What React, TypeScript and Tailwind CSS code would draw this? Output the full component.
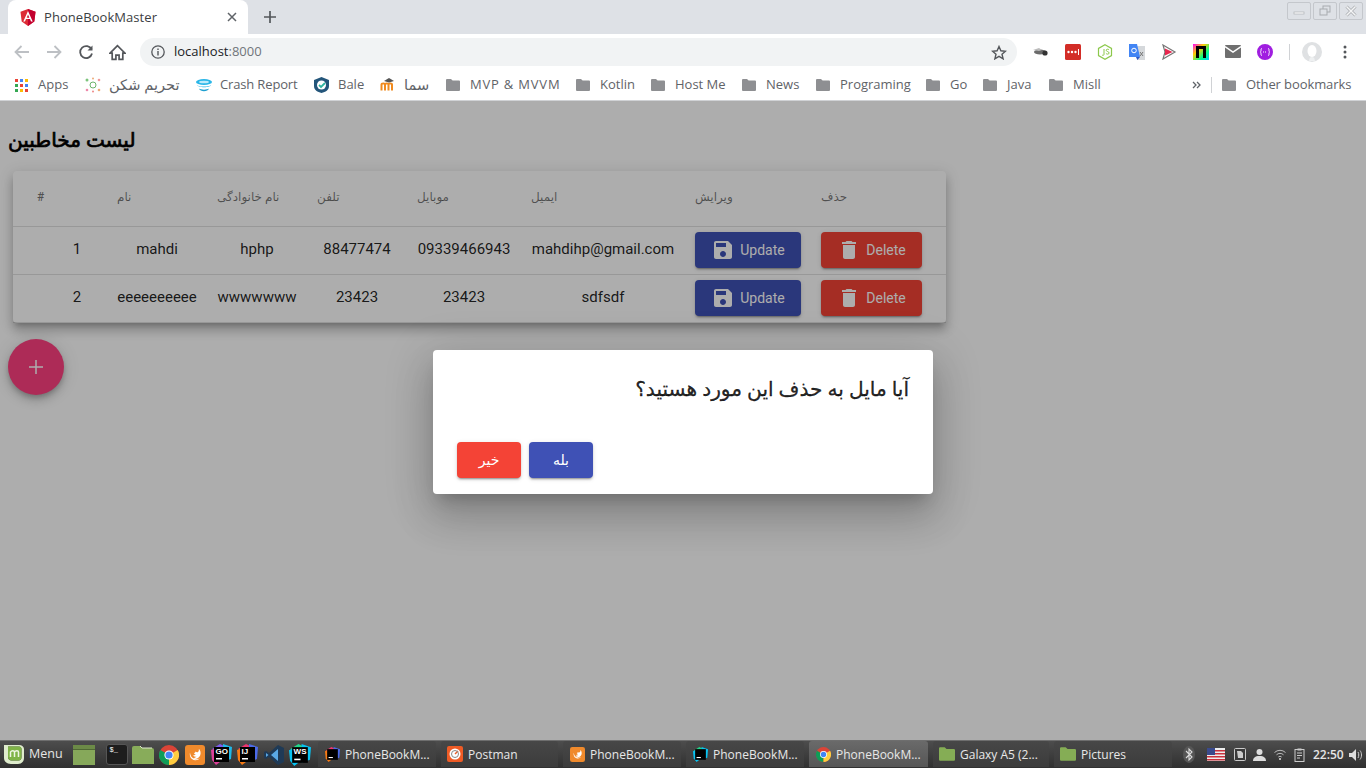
import React from "react";

const ui = { fontFamily: '"Open Sans","Noto Sans","DejaVu Sans",sans-serif' };

function Folder({ c = "#8e8f92", w = 14, h = 12 }: { c?: string; w?: number; h?: number }) {
  return (
    <svg width={w} height={h} viewBox="0 0 14 12" className="shrink-0">
      <path d="M1 0h4l1.6 1.6H13a1 1 0 0 1 1 1V11a1 1 0 0 1-1 1H1a1 1 0 0 1-1-1V1a1 1 0 0 1 1-1z" fill={c} />
    </svg>
  );
}

function Apps() {
  const cols = ["#ea4335", "#4285f4", "#fbbc05", "#34a853", "#ea4335", "#4285f4", "#34a853", "#fbbc05", "#ea4335"];
  return (
    <div className="grid grid-cols-3 gap-[2px] w-[13px] shrink-0">
      {cols.map((c, i) => (
        <svg key={i} width="3" height="3"><rect width="3" height="3" fill={c} /></svg>
      ))}
    </div>
  );
}

function Bookmark({ icon, text, cls, textCls = "" }: { icon: React.ReactNode; text: string; cls: string; textCls?: string }) {
  return (
    <div className={`flex items-center ${cls}`}>
      {icon}
      <span className={`whitespace-nowrap ${textCls}`}>{text}</span>
    </div>
  );
}

function ChromeIcon({ s = 20 }: { s?: number }) {
  return (
    <svg width={s} height={s} viewBox="0 0 20 20" className="shrink-0">
      <circle cx="10" cy="10" r="10" fill="#db4437" />
      <path d="M10 10 1.3 5 A10 10 0 0 0 10 20 Z" fill="#0f9d58" />
      <path d="M10 10 10 20 A10 10 0 0 0 18.7 5 Z" fill="#ffcd40" />
      <circle cx="10" cy="10" r="4.6" fill="#fff" />
      <circle cx="10" cy="10" r="3.6" fill="#4285f4" />
    </svg>
  );
}

function FirefoxIcon({ s = 20 }: { s?: number }) {
  return (
    <svg width={s} height={s} viewBox="0 0 20 20" className="shrink-0">
      <rect width="20" height="20" rx="3" fill="#f08a2c" />
      <path d="M14.5 4.5c1.5 2 1.6 5.4-.3 7.6-2 2.2-5.4 2.4-7.4.7 1.7.4 3.6-.1 4.6-1.4-1.3.5-2.8.2-3.4-.9 1.1.3 2.4-.4 2.8-1.4-1 .2-1.7-.4-1.7-1.2.9-.2 1.3-.7 1.4-1.4.8.8 2 1 2.8.2.5-.6.7-1.6.6-2.7z" fill="#fff" />
      <path d="M5 7.5c-.8 3.2.8 7.4 5.2 7.7 2 .1 3.6-.6 4.7-1.9-2.6 1.6-6.4 1.3-8.3-1.3C5.700 10.800 5.200 9.200 5 7.500z" fill="#fff" />
    </svg>
  );
}

function JbIcon({ label, colors, s = 21 }: { label: string; colors: string[]; s?: number }) {
  return (
    <div className="relative shrink-0" style={{ width: s, height: s }}>
      <svg width={s} height={s} viewBox="0 0 21 21" className="absolute inset-0">
        <path d="M1 5 9 0l6 3-3 6z" fill={colors[0]} />
        <path d="M12 0l9 3-1 12-8 3z" fill={colors[1]} />
        <path d="M0 6l5-2 4 14-4 3-4-5z" fill={colors[2]} />
        <rect x="3" y="3" width="15" height="15" fill="#000" />
        <rect x="5" y="14" width="6" height="1.500" fill="#fff" />
      </svg>
      <span className="absolute left-[5px] top-[3px] text-[8px] leading-[10px] font-bold text-white" style={{ fontFamily: '"Liberation Sans",sans-serif' }}>{label}</span>
    </div>
  );
}

const JB_GO = ["#7b5cf0", "#1fb8e8", "#dd3f9a"];
const JB_IJ = ["#f0346e", "#4b6ae8", "#f97a12"];
const JB_WS = ["#21d789", "#07c3f2", "#07c3f2"];

function TaskItem({ icon, text, active, w }: { icon: React.ReactNode; text: string; active?: boolean; w: string }) {
  return (
    <div className={`h-[26px] flex items-center gap-[5px] pl-[6px] rounded-t-[3px] shrink-0 ${w} ${active ? "bg-gradient-to-b from-[#6a6a6a] to-[#565656]" : "bg-gradient-to-b from-[#474747] to-[#3c3c3c]"}`}>
      <div className="w-[16px] h-[16px] flex items-center justify-center shrink-0">{icon}</div>
      <span className="text-[12px] mt-[1px] text-[#e8e8e8] whitespace-nowrap">{text}</span>
    </div>
  );
}

const Save = () => (
  <svg width="24" height="24" viewBox="0 0 24 24" fill="currentColor" className="shrink-0">
    <path d="M17 3H5c-1.11 0-2 .9-2 2v14c0 1.1.89 2 2 2h14c1.1 0 2-.9 2-2V7l-4-4zm-5 16c-1.66 0-3-1.34-3-3s1.34-3 3-3 3 1.34 3 3-1.34 3-3 3zm3-10H5V5h10v4z" />
  </svg>
);
const Trash = () => (
  <svg width="24" height="24" viewBox="0 0 24 24" fill="currentColor" className="shrink-0">
    <path d="M6 19c0 1.1.9 2 2 2h8c1.1 0 2-.9 2-2V7H6v12zM19 4h-3.5l-1-1h-5l-1 1H5v2h14V4z" />
  </svg>
);

const btnShadow = "shadow-[0_3px_1px_-2px_rgba(0,0,0,.2),0_2px_2px_0_rgba(0,0,0,.14),0_1px_5px_0_rgba(0,0,0,.12)]";
const gridCols = "grid grid-cols-[60px_80px_80px_80px_94px_144px_106px_101px] gap-x-5 pl-6 pr-6";

function Row({ n, a, b, c, d, e }: { n: string; a: string; b: string; c: string; d: string; e: string }) {
  return (
    <div className={`${gridCols} h-[48px] items-center border-b border-black/12 text-[15px] text-black/87 text-center`}>
      <div className="pl-5 pb-[2px]">{n}</div>
      <div className="pb-[2px] whitespace-nowrap">{a}</div>
      <div className="pb-[2px] whitespace-nowrap">{b}</div>
      <div className="pb-[2px] whitespace-nowrap">{c}</div>
      <div className="pb-[2px] whitespace-nowrap">{d}</div>
      <div className="pb-[2px] whitespace-nowrap">{e}</div>
      <div className={`h-[36px] mb-[2px] rounded-[4px] bg-[#3f51b5] text-white text-[14px] flex items-center justify-center gap-[5px] ${btnShadow}`}>
        <Save /><span className="mt-[1px]">Update</span>
      </div>
      <div className={`h-[36px] mb-[2px] rounded-[4px] bg-[#f44336] text-white text-[14px] flex items-center justify-center gap-[5px] ${btnShadow}`}>
        <Trash /><span className="mt-[1px]">Delete</span>
      </div>
    </div>
  );
}

export default function App() {
  const fd = <Folder />;
  return (
    <div className="h-screen w-full flex flex-col overflow-hidden bg-white" style={ui}>
      {/* tab strip */}
      <div className="h-[34px] bg-[#dee1e6] flex items-end relative shrink-0">
        <div className="ml-[8px] w-[240px] h-[34px] bg-white rounded-t-[8px] flex items-center pl-[12px] relative">
          <svg width="16" height="17" viewBox="0 0 16 17" className="shrink-0">
            <path d="M8 0 .5 2.700 1.700 12.600 8 17l6.300-4.400 1.200-9.900z" fill="#dd2c35" />
            <path d="M8 0v17l6.300-4.400 1.200-9.900z" fill="#c3002f" />
            <path d="M8 2 3.300 12.500H5l1-2.400h4l1 2.400h1.700zM6.700 8.700 8 5.600l1.300 3.100z" fill="#fff" />
          </svg>
          <span className="ml-[8px] mt-[1px] text-[13px] tracking-[.06px] text-[#3c4043] whitespace-nowrap">PhoneBookMaster</span>
          <svg width="10" height="10" viewBox="0 0 10 10" className="absolute left-[219px] top-[12px]">
            <path d="M1 1l8 8M9 1l-8 8" stroke="#5f6368" strokeWidth="1.500" />
          </svg>
        </div>
        <svg width="14" height="14" viewBox="0 0 14 14" className="ml-[15px] mb-[10px]">
          <path d="M7 1v12M1 7h12" stroke="#54575b" strokeWidth="1.700" />
        </svg>
        <div className="absolute top-[2px] right-[3px] flex gap-[2px]">
          {[0, 1, 2].map((i) => (
            <div key={i} className="w-[24px] h-[18px] border border-[#c4c7cc] rounded-[2px] flex items-center justify-center">
              <svg width="14" height="12" viewBox="0 0 14 12">
                {i === 0 && <rect x="2" y="7" width="10" height="2" fill="#fff" stroke="#b4b7bb" strokeWidth=".8" />}
                {i === 1 && (
                  <>
                    <rect x="5" y="1" width="7" height="6" fill="none" stroke="#a8abaf" />
                    <rect x="2" y="4" width="7" height="6" fill="#dee1e6" stroke="#a8abaf" />
                  </>
                )}
                {i === 2 && (
                  <>
                    <path d="M2.500 1.500 11.500 10.500M11.500 1.500 2.500 10.500" stroke="#a8abaf" strokeWidth="3" />
                    <path d="M2.500 1.500 11.500 10.500M11.500 1.500 2.500 10.500" stroke="#f4f5f6" strokeWidth="1.500" />
                  </>
                )}
              </svg>
            </div>
          ))}
        </div>
      </div>

      {/* toolbar */}
      <div className="h-[33px] flex items-center pt-[2px] relative shrink-0">
        <div className="flex items-center w-[140px] shrink-0">
          <svg width="16" height="14" viewBox="0 0 16 14" className="ml-[14px]"><path d="M15 7H2M7.500 1 1.500 7l6 6" fill="none" stroke="#bdc0c4" strokeWidth="1.800" /></svg>
          <svg width="16" height="14" viewBox="0 0 16 14" className="ml-[16px]"><path d="M1 7h13M8.500 1l6 6-6 6" fill="none" stroke="#bdc0c4" strokeWidth="1.800" /></svg>
          <svg width="16" height="16" viewBox="0 0 16 16" className="ml-[16px]"><path d="M13.600 5.500A6 6 0 1 0 14 9.500" fill="none" stroke="#54575b" strokeWidth="1.800" /><path d="M14.500 1.500v5h-5z" fill="#54575b" /></svg>
          <svg width="17" height="17" viewBox="0 0 16 16" className="ml-[15px] mt-[1px]"><path d="M8 1.500 1 8.500h2v6h3.500v-4h3v4H13v-6h2z" fill="none" stroke="#54575b" strokeWidth="1.600" /></svg>
        </div>
        <div className="w-[877px] h-[28px] rounded-[14px] bg-[#f1f3f4] flex items-center pl-[11px] relative shrink-0">
          <svg width="14" height="14" viewBox="0 0 14 14"><circle cx="7" cy="7" r="6.200" fill="none" stroke="#54575b" strokeWidth="1.300" /><path d="M7 6v4.500M7 3.500v1.400" stroke="#54575b" strokeWidth="1.400" /></svg>
          <span className="ml-[9px] text-[13px] text-[#202124]">localhost<span className="text-[#70757a]">:8000</span></span>
          <svg width="16" height="15" viewBox="0 0 16 15" className="absolute right-[10px] top-[7px]"><path d="M8 1.500l1.900 4.300 4.600.4-3.500 3 1.100 4.600L8 11.300l-4.100 2.500L5 9.200l-3.500-3 4.600-.4z" fill="none" stroke="#54575b" strokeWidth="1.400" /></svg>
        </div>
        <div className="flex items-center ml-[16px] gap-[16px] shrink-0">
          <svg width="16" height="16" viewBox="0 0 16 16"><ellipse cx="7" cy="8" rx="6" ry="2.500" fill="#6b6b6b" /><path d="M0 6l6-2 3 2-3 1z" fill="#bbb" /><circle cx="12" cy="9" r="2.600" fill="#333" /></svg>
          <svg width="16" height="16" viewBox="0 0 16 16"><rect width="16" height="16" rx="1.500" fill="#d32d27" /><circle cx="3.500" cy="8" r="1.200" fill="#fff" /><circle cx="7" cy="8" r="1.200" fill="#fff" /><circle cx="10.500" cy="8" r="1.200" fill="#fff" /><rect x="13" y="5" width="1" height="6" fill="#fff" /></svg>
          <svg width="16" height="16" viewBox="0 0 16 16"><path d="M8 .7l6.500 3.700v7.200L8 15.300l-6.500-3.700V4.400z" fill="none" stroke="#8cc84b" strokeWidth="1.200" /><path d="M7 5v5.500c0 1-1.300 1-2 .5M12 6c-.7-1.200-2.800-1-2.800.3 0 1.500 2.900 1 2.900 2.700 0 1.500-2.500 1.500-3.200.2" fill="none" stroke="#8cc84b" strokeWidth="1" /></svg>
          <svg width="16" height="16" viewBox="0 0 16 16"><path d="M7 2h9v14H8z" fill="#d5d8db" /><path d="M0 0h8l3 13H0z" fill="#4285f4" /><path d="M7 13h4l-2.600 3z" fill="#2a56c6" /><circle cx="5" cy="6.500" r="2.300" fill="none" stroke="#fff" strokeWidth="1" /><path d="M11 8l3 4M14 8l-3 4" stroke="#777" /></svg>
          <svg width="16" height="16" viewBox="0 0 16 16"><path d="M2 1l12 7-12 7 2-7z" fill="none" stroke="#777" strokeWidth="1.200" /><path d="M4 4.500 11.500 8 4 11.500z" fill="#e8264e" /></svg>
          <svg width="16" height="16" viewBox="0 0 16 16"><defs><linearGradient id="rb" x1="0" y1="0" x2="1" y2="1"><stop offset="0" stopColor="#f0f" /><stop offset=".35" stopColor="#fc0" /><stop offset=".7" stopColor="#0f8" /><stop offset="1" stopColor="#0cf" /></linearGradient></defs><rect width="16" height="16" fill="url(#rb)" /><path d="M3 2h10v12h-3V5H6v9H3z" fill="#000" /></svg>
          <svg width="16" height="13" viewBox="0 0 16 13"><rect width="16" height="13" rx="1" fill="#6f6f6f" /><path d="M0 1.500 8 7l8-5.500" fill="none" stroke="#fff" strokeWidth="1.500" /></svg>
          <svg width="16" height="16" viewBox="0 0 16 16"><circle cx="8" cy="8" r="8" fill="#a01ee0" /><path d="M5 4.500c-1 0-1 1-1 2s-.8 1.500-.8 1.500.8.500.8 1.500 0 2 1 2M11 4.500c1 0 1 1 1 2s.8 1.500.8 1.500-.8.500-.8 1.500 0 2-1 2" fill="none" stroke="#fff" /><path d="M6 8h4" stroke="#fff" strokeDasharray="1 1" /></svg>
        </div>
        <div className="ml-[16px] w-px h-[16px] bg-[#d0d2d5] shrink-0" />
        <svg width="20" height="20" viewBox="0 0 20 20" className="ml-[12px] shrink-0"><circle cx="10" cy="10" r="10" fill="#dfe1e3" /><ellipse cx="10" cy="9" rx="4.500" ry="6" fill="#fff" /><path d="M10 15c3 0 2.500 3 3 4h-6c.5-1 0-4 3-4z" fill="#eef0f1" /></svg>
        <svg width="4" height="14" viewBox="0 0 4 14" className="ml-[21px] shrink-0"><circle cx="2" cy="2" r="1.500" fill="#54575b" /><circle cx="2" cy="7" r="1.500" fill="#54575b" /><circle cx="2" cy="12" r="1.500" fill="#54575b" /></svg>
      </div>

      {/* bookmarks */}
      <div className="h-[34px] flex items-center text-[13px] text-[#5f6368] border-b border-[#d0d2d5] relative shrink-0 pl-[15px] pt-[3px]">
        <Bookmark cls="gap-[10px] w-[70px]" icon={<Apps />} text="Apps" />
        <Bookmark cls="gap-[8px] w-[111px]" textCls="text-[14.6px]" text="تحریم شکن" icon={
          <svg width="16" height="16" viewBox="0 0 16 16" className="shrink-0"><circle cx="8" cy="8" r="3" fill="none" stroke="#6cb56c" /><circle cx="2" cy="3" r="1.500" fill="#7cc47c" /><circle cx="14" cy="3" r="1.300" fill="#e99" /><circle cx="2" cy="13" r="1.300" fill="#e8a" /><circle cx="14" cy="13" r="1.300" fill="#ea7" /><circle cx="8" cy="1.500" r="1" fill="#ea7" /><circle cx="8" cy="14.500" r="1" fill="#e88" /></svg>
        } />
        <Bookmark cls="gap-[8px] w-[118px]" textCls="tracking-[-.15px]" text="Crash Report" icon={
          <svg width="16" height="13" viewBox="0 0 16 13" className="shrink-0"><ellipse cx="8" cy="3" rx="8" ry="3" fill="#29b6e8" /><ellipse cx="8" cy="3" rx="5" ry="1.300" fill="#bdeafa" /><path d="M1 6c2 2 12 2 14 0-.5 3-13 3-14 0z" fill="#29b6e8" /><path d="M3 9.500c2 1.500 8 1.500 10 0C12 13 4 13 3 9.500z" fill="#1d9fd0" /></svg>
        } />
        <Bookmark cls="gap-[9px] w-[66px]" text="Bale" icon={
          <svg width="15" height="16" viewBox="0 0 15 16" className="shrink-0"><path d="M7.500 0 15 3v6c0 4-3.500 6-7.500 7C3.500 15 0 13 0 9V3z" fill="#23557a" /><circle cx="7.500" cy="8" r="4.500" fill="#fff" /><path d="M5 8l2 2 4-4" fill="none" stroke="#2eb5a0" strokeWidth="1.800" /></svg>
        } />
        <Bookmark cls="gap-[8px] w-[66px]" textCls="text-[14.6px]" text="سما" icon={
          <svg width="16" height="13" viewBox="0 0 16 13" className="shrink-0"><path d="M1.500 12.500V6.500c0-1.500 3.500-1.500 3.500 0v6M5 6.500c0-1.500 3.500-1.500 3.500 0v6M8.500 6.500c0-1.500 3.500-1.500 3.500 0v6" fill="none" stroke="#f08a1e" strokeWidth="2" /><path d="M4 3l5-3 5 3-5 1.500z" fill="#555" /></svg>
        } />
        <Bookmark cls="gap-[10px] w-[130px]" textCls="tracking-[.8px]" icon={fd} text="MVP & MVVM" />
        <Bookmark cls="gap-[10px] w-[75px]" icon={fd} text="Kotlin" />
        <Bookmark cls="gap-[10px] w-[91px]" icon={fd} text="Host Me" />
        <Bookmark cls="gap-[10px] w-[74px]" icon={fd} text="News" />
        <Bookmark cls="gap-[10px] w-[110px]" icon={fd} text="Programing" />
        <Bookmark cls="gap-[10px] w-[57px]" icon={fd} text="Go" />
        <Bookmark cls="gap-[10px] w-[66px]" icon={fd} text="Java" />
        <Bookmark cls="gap-[10px] w-[143px]" icon={fd} text="Misll" />
        <svg width="9" height="8" viewBox="0 0 9 8" className="shrink-0"><path d="M1 1l3 3-3 3M5 1l3 3-3 3" fill="none" stroke="#5f6368" strokeWidth="1.300" /></svg>
        <div className="ml-[10px] w-px h-[16px] bg-[#d0d2d5] shrink-0" />
        <Bookmark cls="gap-[10px] ml-[10px]" textCls="tracking-[-.1px]" icon={fd} text="Other bookmarks" />
      </div>

      {/* page */}
      <main className="flex-1 min-h-0 relative bg-white overflow-hidden" style={{ fontFamily: 'Roboto,"Noto Sans","DejaVu Sans",sans-serif' }}>
        <h2 className="text-[20px] font-normal leading-[32px] text-black pl-[8px] pt-[23px] h-[70px] [-webkit-text-stroke:0.7px_#000]">لیست مخاطبین</h2>
        <div className="ml-[13px] w-[933px] bg-white rounded-[4px] shadow-[0_5px_5px_-3px_rgba(0,0,0,.2),0_8px_10px_1px_rgba(0,0,0,.14),0_3px_14px_2px_rgba(0,0,0,.12)]">
          <div className={`${gridCols} h-[56px] items-center border-b border-black/12 text-[12px] font-medium text-black/54 pb-[4px]`}>
            <div>#</div>
            <div>نام</div>
            <div>نام خانوادگی</div>
            <div>تلفن</div>
            <div>موبایل</div>
            <div>ایمیل</div>
            <div>ویرایش</div>
            <div>حذف</div>
          </div>
          <Row n="1" a="mahdi" b="hphp" c="88477474" d="09339466943" e="mahdihp@gmail.com" />
          <Row n="2" a="eeeeeeeeee" b="wwwwwww" c="23423" d="23423" e="sdfsdf" />
        </div>
        <div className="mt-[16px] ml-[8px] w-[56px] h-[56px] rounded-full bg-[#ff4081] flex items-center justify-center shadow-[0_3px_5px_-1px_rgba(0,0,0,.2),0_6px_10px_0_rgba(0,0,0,.14),0_1px_18px_0_rgba(0,0,0,.12)]">
          <svg width="14" height="14" viewBox="0 0 14 14"><path d="M7 0v14M0 7h14" stroke="#fff" strokeWidth="1.500" /></svg>
        </div>

        <div className="absolute inset-0 bg-black/32 flex items-center justify-center pt-[3px]">
          <div className="w-[500px] h-[144px] bg-white rounded-[4px] p-[24px] flex flex-col shadow-[0_11px_15px_-7px_rgba(0,0,0,.2),0_24px_38px_3px_rgba(0,0,0,.14),0_9px_46px_8px_rgba(0,0,0,.12)]">
            <div dir="rtl" className="text-[20.15px] leading-[32px] text-black/87 -mt-[1px] [-webkit-text-stroke:0.3px_rgba(0,0,0,.87)]">آیا مایل به حذف این مورد هستید؟</div>
            <div className="mt-auto flex gap-[8px] h-[36px] -mb-[8px]">
              <div className={`w-[64px] rounded-[4px] bg-[#f44336] text-white text-[14px] font-medium flex items-center justify-center ${btnShadow}`}>خیر</div>
              <div className={`w-[64px] rounded-[4px] bg-[#3f51b5] text-white text-[14px] font-medium flex items-center justify-center ${btnShadow}`}>بله</div>
            </div>
          </div>
        </div>
      </main>

      {/* taskbar */}
      <div className="h-[28px] shrink-0 bg-gradient-to-b from-[#4d4d4d] to-[#303030] border-t border-[#6e6e6e] flex items-end relative">
        <div className="w-[318px] h-[27px] flex items-center shrink-0">
          <svg width="20" height="21" viewBox="0 0 20 21" className="ml-[4px] shrink-0">
            <path d="M0 1h4v12c0 2 1.500 3.500 3.500 3.500h7c2 0 3-1.500 3-3.500V5c0-1.500-1-2.500-2.500-2.500H4V1h11c3 0 5 2 5 4v9c0 3.500-2.500 6-6 6H7c-4 0-7-2.500-7-6z" fill="#dfeccd" />
            <path d="M4 2.500h11c1.500 0 2.500 1 2.500 2.500v8c0 2-1 3.500-3 3.500h-7C5.500 16.500 4 15 4 13z" fill="#7fb347" />
            <path d="M6.500 13V7.500M6.500 8c1-1.800 3.800-1.800 4 0v5M10.500 8c1-1.800 4-1.800 4 0v5" fill="none" stroke="#eef5e2" strokeWidth="1.500" />
          </svg>
          <span className="ml-[5px] text-[12.500px] text-[#e6e6e6]">Menu</span>
          <svg width="22" height="20" viewBox="0 0 22 20" className="ml-[10px] shrink-0"><rect width="22" height="20" fill="#86a85a" /><rect y="0" width="22" height="4" fill="#6c8a47" /><rect y="4" width="22" height="1" fill="#4f6834" /></svg>
          <div className="ml-[11px] w-[22px] h-[21px] bg-[#1d1d1d] rounded-[3px] border border-[#555] shrink-0 text-[7px] leading-[10px] pl-[3px] text-white" style={{ fontFamily: '"Liberation Mono",monospace' }}>$_</div>
          <svg width="22" height="19" viewBox="0 0 22 19" className="ml-[4px] shrink-0"><path d="M0 3a2 2 0 0 1 2-2h6l2 2h10a2 2 0 0 1 2 2v14H0z" fill="#88ac5a" /><path d="M8 1l2 2h10" fill="none" stroke="#dfe8cf" /></svg>
          <div className="ml-[5px] shrink-0"><ChromeIcon s={20} /></div>
          <div className="ml-[6px] shrink-0"><FirefoxIcon s={20} /></div>
          <div className="ml-[6px] shrink-0"><JbIcon label="GO" colors={JB_GO} /></div>
          <div className="ml-[5px] shrink-0"><JbIcon label="IJ" colors={JB_IJ} /></div>
          <svg width="20" height="20" viewBox="0 0 20 20" className="ml-[6px] shrink-0"><path d="M14 0l6 3v14l-6 3-9-8-3 2-2-1V7l2-1 3 2z" fill="#1f3a56" /><path d="M14 4v12L7 10z" fill="#5aa9e6" /><path d="M2 8l2.500 2L2 12z" fill="#5aa9e6" /></svg>
          <div className="ml-[5px] shrink-0"><JbIcon label="WS" colors={JB_WS} s={22} /></div>
        </div>
        <div className="flex gap-[5px] items-end mb-[1px] shrink-0">
          <TaskItem w="w-[118px]" icon={<JbIcon label="" colors={JB_IJ} s={15} />} text="PhoneBookM..." />
          <TaskItem w="w-[117px]" icon={
            <svg width="16" height="16" viewBox="0 0 16 16"><rect width="16" height="16" rx="2" fill="#ef5b25" /><circle cx="8" cy="8" r="5.500" fill="#fff" /><path d="M8 8l3-3" stroke="#ef5b25" strokeWidth="1.500" /><circle cx="8" cy="8" r="3.500" fill="none" stroke="#888" /></svg>
          } text="Postman" />
          <TaskItem w="w-[118px]" icon={<FirefoxIcon s={15} />} text="PhoneBookM..." />
          <TaskItem w="w-[118px]" icon={<JbIcon label="" colors={JB_WS} s={15} />} text="PhoneBookM..." />
          <TaskItem w="w-[119px]" active icon={<ChromeIcon s={15} />} text="PhoneBookM..." />
          <TaskItem w="w-[116px]" icon={<Folder c="#85ad55" w={16} h={14} />} text="Galaxy A5 (2..." />
          <TaskItem w="w-[118px]" icon={<Folder c="#85ad55" w={16} h={14} />} text="Pictures" />
        </div>
        <div className="h-[27px] flex items-center ml-[11px] shrink-0">
          <svg width="12" height="17" viewBox="0 0 12 17" className="shrink-0"><ellipse cx="6" cy="8.500" rx="6" ry="8.500" fill="#565656" /><path d="M3 5l6 6-3 3V3l3 3-6 6" fill="none" stroke="#ddd" strokeWidth="1.100" /></svg>
          <svg width="18" height="13" viewBox="0 0 18 13" className="ml-[12px] shrink-0"><rect width="18" height="13" fill="#eee" /><rect y="2" width="18" height="1.500" fill="#c9313d" /><rect y="5" width="18" height="1.500" fill="#c9313d" /><rect y="8" width="18" height="1.500" fill="#c9313d" /><rect y="11" width="18" height="1.500" fill="#c9313d" /><rect width="8" height="7" fill="#3a4a8c" /></svg>
          <svg width="12" height="13" viewBox="0 0 12 13" className="ml-[9px] shrink-0"><rect x=".5" y=".5" width="11" height="12" rx="1" fill="#3a3a3a" stroke="#ccc" /><path d="M3 3h4l2 2v5H4z" fill="#ccc" /></svg>
          <svg width="13" height="12" viewBox="0 0 13 12" className="ml-[7px] shrink-0"><circle cx="6.500" cy="3" r="3" fill="#ddd" /><path d="M0 12c0-3 2-5 6.500-5S13 9 13 12z" fill="#ddd" /></svg>
          <svg width="12" height="11" viewBox="0 0 12 11" className="ml-[8px] shrink-0"><path d="M.5 3.500a8 8 0 0 1 11 0M2.500 5.800a5 5 0 0 1 7 0M4.300 8a2.500 2.500 0 0 1 3.400 0" fill="none" stroke="#bbb" /><circle cx="6" cy="10" r="1" fill="#ddd" /></svg>
          <svg width="12" height="14" viewBox="0 0 12 14" className="ml-[8px] shrink-0"><rect x="1" y="1.500" width="9" height="12" fill="none" stroke="#ccc" /><rect x="3.500" y=".5" width="4" height="2" fill="#ccc" /><path d="M3 5h5M3 7.500h5M3 10h3" stroke="#ccc" /></svg>
          <span className="ml-[7px] text-[12px] font-semibold text-[#e6e6e6] whitespace-nowrap">22:50</span>
          <svg width="14" height="12" viewBox="0 0 14 12" className="ml-[5px] shrink-0"><path d="M0 4h3l4-4v12l-4-4H0z" fill="#ddd" /><path d="M9 3c1 1.500 1 4.500 0 6M11 1.500c2 2.500 2 6.500 0 9" fill="none" stroke="#ccc" /></svg>
        </div>
      </div>
    </div>
  );
}
